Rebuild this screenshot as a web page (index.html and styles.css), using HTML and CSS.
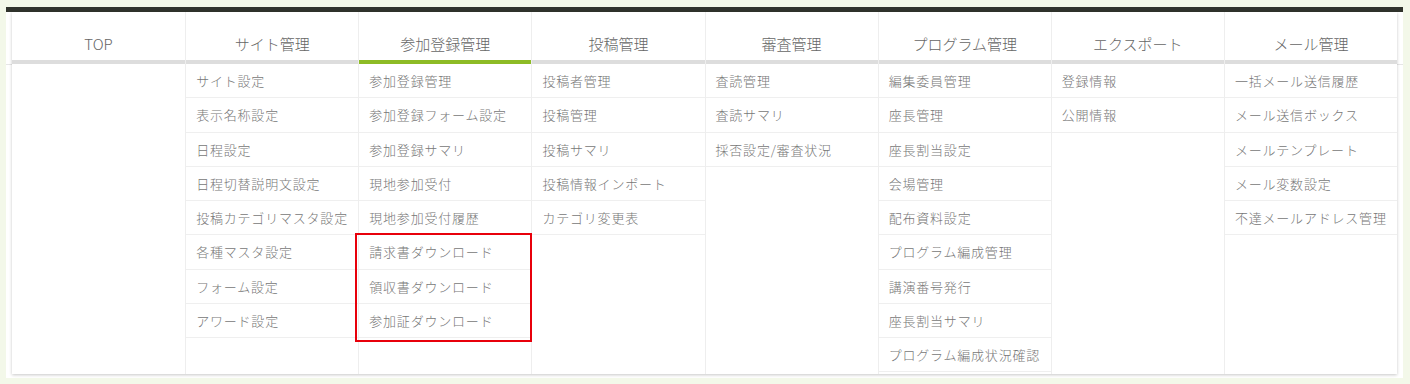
FILE: index.html
```html
<!DOCTYPE html>
<html lang="ja">
<head>
<meta charset="utf-8">
<title>Menu</title>
<link rel="stylesheet" href="styles.css">
</head>
<body>
<div class="frame">
  <div class="panel">
    <div class="col">
      <div class="head">TOP</div>
    </div>
    <div class="col">
      <div class="head">サイト管理</div>
      <ul class="items">
        <li>サイト設定</li>
        <li>表示名称設定</li>
        <li>日程設定</li>
        <li>日程切替説明文設定</li>
        <li>投稿カテゴリマスタ設定</li>
        <li>各種マスタ設定</li>
        <li>フォーム設定</li>
        <li>アワード設定</li>
      </ul>
    </div>
    <div class="col">
      <div class="head active">参加登録管理</div>
      <ul class="items">
        <li>参加登録管理</li>
        <li>参加登録フォーム設定</li>
        <li>参加登録サマリ</li>
        <li>現地参加受付</li>
        <li>現地参加受付履歴</li>
      </ul>
      <ul class="items highlight">
        <li>請求書ダウンロード</li>
        <li>領収書ダウンロード</li>
        <li>参加証ダウンロード</li>
      </ul>
    </div>
    <div class="col">
      <div class="head">投稿管理</div>
      <ul class="items">
        <li>投稿者管理</li>
        <li>投稿管理</li>
        <li>投稿サマリ</li>
        <li>投稿情報インポート</li>
        <li>カテゴリ変更表</li>
      </ul>
    </div>
    <div class="col">
      <div class="head">審査管理</div>
      <ul class="items">
        <li>査読管理</li>
        <li>査読サマリ</li>
        <li>採否設定/審査状況</li>
      </ul>
    </div>
    <div class="col">
      <div class="head">プログラム管理</div>
      <ul class="items">
        <li>編集委員管理</li>
        <li>座長管理</li>
        <li>座長割当設定</li>
        <li>会場管理</li>
        <li>配布資料設定</li>
        <li>プログラム編成管理</li>
        <li>講演番号発行</li>
        <li>座長割当サマリ</li>
        <li>プログラム編成状況確認</li>
      </ul>
    </div>
    <div class="col">
      <div class="head">エクスポート</div>
      <ul class="items">
        <li>登録情報</li>
        <li>公開情報</li>
      </ul>
    </div>
    <div class="col">
      <div class="head">メール管理</div>
      <ul class="items">
        <li>一括メール送信履歴</li>
        <li>メール送信ボックス</li>
        <li>メールテンプレート</li>
        <li>メール変数設定</li>
        <li>不達メールアドレス管理</li>
      </ul>
    </div>
  </div>
</div>
</body>
</html>
```

FILE: styles.css
```css
html, body {
  margin: 0;
  padding: 0;
}

body {
  background: #f3f8e9;
  padding: 7px 0 0 6px;
  font-family: "Noto Sans CJK JP", "Noto Sans", sans-serif;
  height: 384px;
  box-sizing: border-box;
  overflow: hidden;
}

.frame {
  width: 1397px;
  box-sizing: border-box;
  border-top: 5px solid #30332c;
  background: #fff linear-gradient(#e6e6e6, #e6e6e6) 0 52px / 100% 1px no-repeat;
  padding: 0 6px 4px 6px;
}

.panel {
  display: grid;
  grid-template-columns: repeat(8, 1fr);
  height: 362px;
  box-shadow: 0 1px 3px rgba(0, 0, 0, 0.22);
  background: #fff;
}

.col {
  border-left: 1px solid #eeeeee;
  min-width: 0;
}

.col:first-child {
  border-left: none;
}

.head {
  height: 52px;
  box-sizing: border-box;
  padding-top: 22px;
  line-height: 20px;
  font-size: 15px;
  font-weight: 300;
  color: #666;
  text-align: center;
  border-bottom: 4px solid #dddddd;
}

.head.active {
  border-bottom-color: #8dbb25;
}

.items {
  list-style: none;
  margin: 0;
  padding: 0;
}

.items li {
  height: 34.25px;
  box-sizing: border-box;
  line-height: 33.25px;
  border-bottom: 1px solid #efefef;
  padding: 0 10px;
  font-size: 13px;
  font-weight: 300;
  letter-spacing: 0.8px;
  color: #777;
  white-space: nowrap;
}

.items.highlight {
  position: relative;
}

.items.highlight::after {
  content: "";
  position: absolute;
  left: -4px;
  right: -1px;
  top: -2px;
  bottom: -4px;
  border: 2px solid #e8000b;
  pointer-events: none;
}
```
